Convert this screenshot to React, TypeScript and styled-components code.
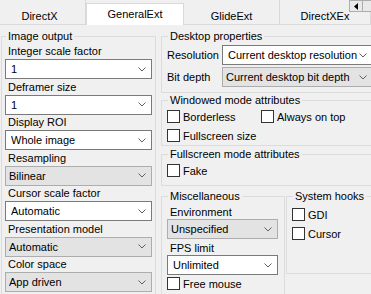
import React from "react";
import styled, { createGlobalStyle } from "styled-components";

const GlobalStyle = createGlobalStyle`
  html, body {
    margin: 0;
    padding: 0;
    background: #f0f0f0;
    overflow: hidden;
  }
  body {
    font-family: "Liberation Sans", Arial, sans-serif;
    font-size: 11px;
    color: #000;
  }
`;

const Window = styled.div`
  position: relative;
  width: 371px;
  height: 294px;
  overflow: hidden;
  background: #f0f0f0;
`;

const TabStrip = styled.div`
  position: relative;
  display: flex;
  height: 25px;
  box-sizing: border-box;
  border-bottom: 1px solid #d9d9d9;
`;

const Tab = styled.div<{ $w: number; $active?: boolean; $shift?: number }>`
  flex: 0 0 ${(p) => p.$w}px;
  box-sizing: border-box;
  text-align: center;
  white-space: nowrap;
  overflow: hidden;
  line-height: 14px;
  padding-right: ${(p) => p.$shift || 0}px;
  ${(p) =>
    p.$active
      ? `
    margin-top: 3px;
    margin-bottom: -1px;
    padding-top: 3px;
    background: #fff;
    border: 1px solid #d9d9d9;
    border-bottom: none;
  `
      : `
    padding-top: 9px;
    border-right: 1px solid #d9d9d9;
  `}
`;

const Scroller = styled.div`
  position: absolute;
  top: 0;
  left: 349px;
  display: flex;
`;

const ScrollButton = styled.div<{ $w: number }>`
  width: ${(p) => p.$w}px;
  height: 12px;
  box-sizing: border-box;
  border: 1px solid #adadad;
  background: #e9e9e9;
  display: flex;
  align-items: center;
  justify-content: center;
  & + & {
    margin-left: -1px;
  }
`;

const Content = styled.div`
  display: grid;
  grid-template-columns: 155px 212px;
  column-gap: 5px;
  padding: 4px 0 0 1px;
  align-items: start;
`;

const Group = styled.fieldset<{ $top?: number; $pad?: string }>`
  margin: ${(p) => p.$top || 0}px 0 0 0;
  padding: ${(p) => p.$pad || "0 5px"};
  border: 1px solid #dcdcdc;
  min-width: 0;
`;

const Legend = styled.legend`
  padding: 0 2px;
  margin-left: 1px;
  line-height: 14px;
`;

const Column = styled.div`
  display: flex;
  flex-direction: column;
`;

const Field = styled.div`
  display: flex;
  flex-direction: column;
  margin-bottom: 0.5px;
`;

const Label = styled.div<{ $h?: number }>`
  height: ${(p) => p.$h || 15}px;
  line-height: ${(p) => p.$h || 15}px;
  padding-left: 3px;
  white-space: nowrap;
`;

const ComboBox = styled.div<{ $flat?: boolean }>`
  display: flex;
  align-items: center;
  height: 20px;
  box-sizing: border-box;
  border: 1px solid ${(p) => (p.$flat ? "#adadad" : "#7a7a7a")};
  background: ${(p) => (p.$flat ? "#e3e3e3" : "#fff")};
  padding: 0 5px 0 ${(p) => (p.$flat ? 3 : 5)}px;
`;

const ComboText = styled.span`
  flex: 1;
  overflow: hidden;
  white-space: nowrap;
`;

const DesktopGrid = styled.div`
  display: grid;
  grid-template-columns: 55px 151px;
  row-gap: 2px;
  padding: 2px 0 5px;
  align-items: center;
`;

const RowLabel = styled.span`
  white-space: nowrap;
`;

const CheckGrid = styled.div<{ $cols?: string; $row?: number; $pt?: number; $pb?: number }>`
  display: grid;
  grid-template-columns: ${(p) => p.$cols || "1fr"};
  grid-auto-rows: ${(p) => p.$row || 19}px;
  padding: ${(p) => p.$pt || 0}px 0 ${(p) => p.$pb || 0}px;
`;

const CheckItem = styled.label`
  display: flex;
  align-items: center;
  white-space: nowrap;
`;

const Box = styled.span`
  width: 13px;
  height: 13px;
  box-sizing: border-box;
  border: 1px solid #333;
  background: #fff;
  margin-right: 3px;
  flex: 0 0 13px;
`;

const BottomRow = styled.div`
  display: grid;
  grid-template-columns: 124px 1fr;
  column-gap: 1px;
  margin-top: 3px;
  align-items: start;
`;

const MiscBody = styled.div`
  display: flex;
  flex-direction: column;
  padding-top: 2px;
  padding-bottom: 10px;
`;

const MiscLabel = styled.div<{ $mt?: number }>`
  line-height: 14px;
  margin-top: ${(p) => p.$mt || 0}px;
  padding-left: 3px;
`;

const Chevron = () => (
  <svg width="8" height="5" viewBox="0 0 8 5">
    <polyline points="0.5,0.5 4,4 7.5,0.5" fill="none" stroke="#606060" strokeWidth="1" />
  </svg>
);

const Combo = ({ value, flat }: { value: string; flat?: boolean }) => (
  <ComboBox $flat={flat}>
    <ComboText>{value}</ComboText>
    <Chevron />
  </ComboBox>
);

const Check = ({ label }: { label: string }) => (
  <CheckItem>
    <Box />
    {label}
  </CheckItem>
);

const leftFields = [
  { label: "Integer scale factor", value: "1" },
  { label: "Deframer size", value: "1" },
  { label: "Display ROI", value: "Whole image" },
  { label: "Resampling", value: "Bilinear", flat: true },
  { label: "Cursor scale factor", value: "Automatic" },
  { label: "Presentation model", value: "Automatic", flat: true },
  { label: "Color space", value: "App driven", flat: true },
];

export default function App() {
  return (
    <Window>
      <GlobalStyle />
      <TabStrip>
        <Tab $w={86} $shift={6}>DirectX</Tab>
        <Tab $w={98} $active>GeneralExt</Tab>
        <Tab $w={96}>GlideExt</Tab>
        <Tab $w={91}>DirectXEx</Tab>
        <Scroller>
          <ScrollButton $w={14}>
            <svg width="4" height="7" viewBox="0 0 4 7">
              <polygon points="4,0 0,3.5 4,7" fill="#000" />
            </svg>
          </ScrollButton>
          <ScrollButton $w={24} />
        </Scroller>
      </TabStrip>

      <Content>
        <Group $pad="1px 3px 6px">
          <Legend>Image output</Legend>
          {leftFields.map((f) => (
            <Field key={f.label}>
              <Label>{f.label}</Label>
              <Combo value={f.value} flat={f.flat} />
            </Field>
          ))}
        </Group>

        <Column>
          <Group>
            <Legend>Desktop properties</Legend>
            <DesktopGrid>
              <RowLabel>Resolution</RowLabel>
              <Combo value="Current desktop resolution" />
              <RowLabel>Bit depth</RowLabel>
              <Combo value="Current desktop bit depth" flat />
            </DesktopGrid>
          </Group>

          <Group>
            <Legend>Windowed mode attributes</Legend>
            <CheckGrid $cols="94px 1fr">
              <Check label="Borderless" />
              <Check label="Always on top" />
              <Check label="Fullscreen size" />
            </CheckGrid>
          </Group>

          <Group $top={1}>
            <Legend>Fullscreen mode attributes</Legend>
            <CheckGrid $pb={5}>
              <Check label="Fake" />
            </CheckGrid>
          </Group>

          <BottomRow>
            <Group $pad="0 6px 0 5px">
              <Legend>Miscellaneous</Legend>
              <MiscBody>
                <MiscLabel>Environment</MiscLabel>
                <Combo value="Unspecified" flat />
                <MiscLabel $mt={2}>FPS limit</MiscLabel>
                <Combo value="Unlimited" />
                <CheckGrid $row={17}>
                  <Check label="Free mouse" />
                </CheckGrid>
              </MiscBody>
            </Group>
            <Group $pad="0 5px 30px">
              <Legend>System hooks</Legend>
              <CheckGrid $pt={2}>
                <Check label="GDI" />
                <Check label="Cursor" />
              </CheckGrid>
            </Group>
          </BottomRow>
        </Column>
      </Content>
    </Window>
  );
}
